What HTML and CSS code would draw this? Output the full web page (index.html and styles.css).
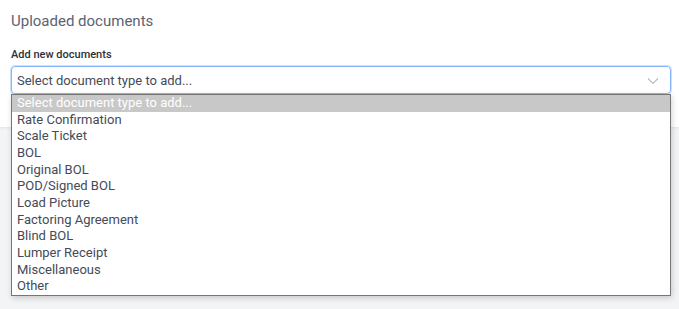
FILE: index.html
```html
<!DOCTYPE html>
<html>
<head>
<meta charset="utf-8">
<link rel="stylesheet" href="styles.css">
</head>
<body>
<div class="card">
  <h2 class="title">Uploaded documents</h2>
  <label class="label">Add new documents</label>
  <div class="field">
    <div class="select">
      <span>Select document type to add...</span>
      <svg class="chev" width="12" height="8" viewBox="0 0 12 8"><path d="M1 1.5 L6 6.5 L11 1.5" fill="none" stroke="#b8bcc4" stroke-width="1.2"/></svg>
    </div>
    <ul class="menu">
      <li class="sel">Select document type to add...</li>
      <li>Rate Confirmation</li>
      <li>Scale Ticket</li>
      <li>BOL</li>
      <li>Original BOL</li>
      <li>POD/Signed BOL</li>
      <li>Load Picture</li>
      <li>Factoring Agreement</li>
      <li>Blind BOL</li>
      <li>Lumper Receipt</li>
      <li>Miscellaneous</li>
      <li>Other</li>
    </ul>
  </div>
</div>
</body>
</html>
```

FILE: styles.css
```css
html, body { margin: 0; padding: 0; }
body {
  background: #f3f4f6;
  font-family: Roboto, "Liberation Sans", sans-serif;
  width: 679px;
  height: 309px;
  overflow: hidden;
}
.card {
  background: #fff;
  height: 127px;
  box-sizing: border-box;
  padding: 11px 8px 0 11px;
  box-shadow: 0 1px 3px rgba(0,0,0,0.08);
}
.title {
  margin: 0;
  font-size: 15px;
  font-weight: 400;
  color: #5b6372;
  line-height: 20px;
}
.label {
  display: block;
  margin-top: 17px;
  font-size: 11px;
  font-weight: 500;
  color: #2d3039;
  line-height: 14px;
}
.field { position: relative; margin-top: 4px; }
.select {
  height: 28px;
  box-sizing: border-box;
  border: 1px solid #86b7fe;
  border-radius: 4px;
  box-shadow: 0 0 0 1px rgba(134,183,254,0.45);
  display: flex;
  align-items: center;
  justify-content: space-between;
  padding: 0 11px 0 5px;
  font-size: 13px;
  color: #444b58;
}
.chev { margin-top: 1px; }
.menu {
  position: absolute;
  left: 0;
  right: 0;
  top: 28px;
  margin: 0;
  padding: 0;
  list-style: none;
  background: #fff;
  border: 1px solid #767676;
  box-shadow: 1px 2px 6px rgba(0,0,0,0.18);
}
.menu li {
  height: 16.67px;
  line-height: 16.67px;
  font-size: 13px;
  color: #444b58;
  padding-left: 5px;
}
.menu li.sel {
  background: #c8c8c8;
  color: #fff;
}
```
